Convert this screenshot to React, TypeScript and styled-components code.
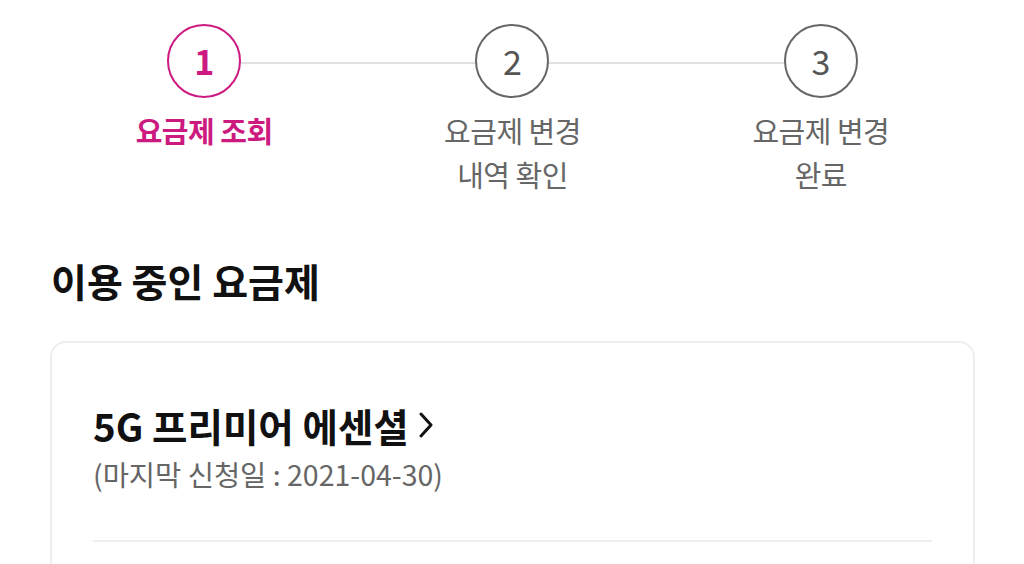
import styled, { createGlobalStyle } from "styled-components";

const GlobalStyle = createGlobalStyle`
  html, body {
    margin: 0;
    padding: 0;
    background: #fff;
  }
  body {
    font-family: "Noto Sans CJK KR", "Noto Sans", sans-serif;
    color: #111;
  }
`;

const Page = styled.div`
  width: 1024px;
  height: 564px;
  overflow: hidden;
  padding: 24px 49px 0 50px;
  box-sizing: border-box;
`;

const Steps = styled.ol`
  list-style: none;
  margin: 0;
  padding: 0;
  display: grid;
  grid-template-columns: repeat(3, 1fr);
`;

const Step = styled.li`
  position: relative;
  display: flex;
  flex-direction: column;
  align-items: center;

  &:not(:last-child)::after {
    content: "";
    position: absolute;
    top: 38px;
    left: 50%;
    width: 100%;
    height: 2px;
    background: #e0e0e0;
    z-index: 0;
  }
`;

const Circle = styled.div<{ $active?: boolean }>`
  position: relative;
  z-index: 1;
  width: 74px;
  height: 74px;
  box-sizing: border-box;
  border-radius: 50%;
  border: 2px solid ${(p) => (p.$active ? "#cc1a80" : "#666")};
  background: #fff;
  display: flex;
  align-items: center;
  justify-content: center;
  font-size: 34px;
  font-weight: ${(p) => (p.$active ? 700 : 400)};
  color: ${(p) => (p.$active ? "#cc1a80" : "#555")};
  line-height: 1;
`;

const StepLabel = styled.div<{ $active?: boolean }>`
  margin-top: 10px;
  font-size: 29px;
  line-height: 44px;
  letter-spacing: -0.5px;
  text-align: center;
  font-weight: ${(p) => (p.$active ? 700 : 400)};
  color: ${(p) => (p.$active ? "#cc1a80" : "#666")};
`;

const SectionTitle = styled.h2`
  margin: 58px 0 0 1px;
  font-size: 39px;
  line-height: 53px;
  font-weight: 700;
  color: #111;
`;

const Card = styled.section`
  margin-top: 34px;
  border: 2px solid #eee;
  border-radius: 16px;
  padding: 58px 41px 200px;
`;

const PlanName = styled.div`
  display: flex;
  align-items: center;
  font-size: 38.5px;
  line-height: 48px;
  font-weight: 700;
  color: #111;

  svg {
    margin-left: 10px;
  }
`;

const AppliedDate = styled.div`
  margin-top: 5px;
  font-size: 28.5px;
  line-height: 39px;
  color: #666;
`;

const Divider = styled.hr`
  margin: 47px 0 0;
  border: none;
  height: 2px;
  background: #eee;
`;

const steps = [
  { no: 1, label: ["요금제 조회"] },
  { no: 2, label: ["요금제 변경", "내역 확인"] },
  { no: 3, label: ["요금제 변경", "완료"] },
];

const Chevron = () => (
  <svg width="14" height="26" viewBox="0 0 14 26" fill="none">
    <polyline
      points="2,2 12,13 2,24"
      stroke="#111"
      strokeWidth="3"
      strokeLinecap="round"
      strokeLinejoin="round"
    />
  </svg>
);

const App = () => {
  const current = 1;
  return (
    <>
      <GlobalStyle />
      <Page>
        <Steps>
          {steps.map((s) => (
            <Step key={s.no}>
              <Circle $active={s.no === current}>{s.no}</Circle>
              <StepLabel $active={s.no === current}>
                {s.label.map((line) => (
                  <div key={line}>{line}</div>
                ))}
              </StepLabel>
            </Step>
          ))}
        </Steps>

        <SectionTitle>이용 중인 요금제</SectionTitle>

        <Card>
          <PlanName>
            5G 프리미어 에센셜
            <Chevron />
          </PlanName>
          <AppliedDate>(마지막 신청일 : 2021-04-30)</AppliedDate>
          <Divider />
        </Card>
      </Page>
    </>
  );
};

export default App;
